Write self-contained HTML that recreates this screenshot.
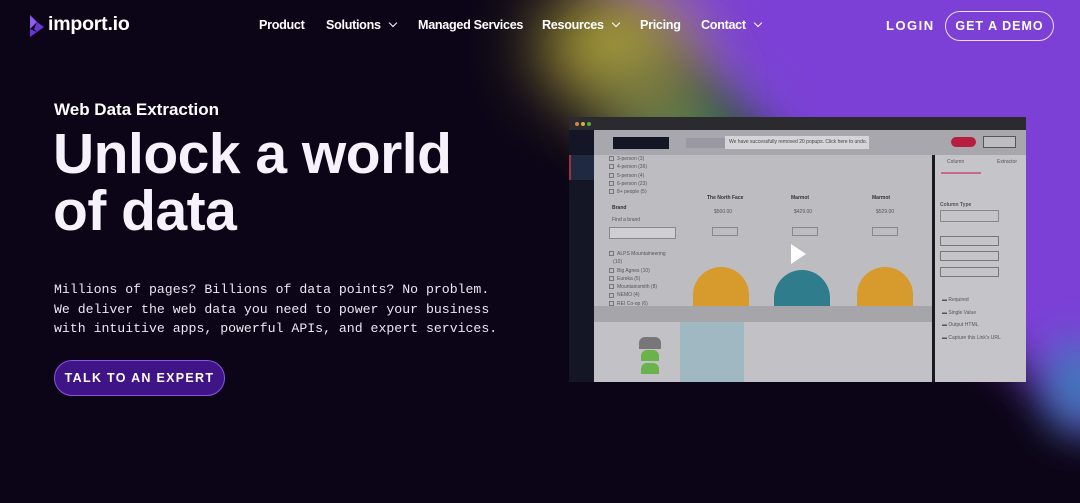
<!DOCTYPE html>
<html><head><meta charset="utf-8"><style>
*{margin:0;padding:0;box-sizing:border-box}
body{width:1080px;height:503px;overflow:hidden;background:#0c0517;font-family:"Liberation Sans",sans-serif;position:relative;color:#fff}
.nav a{position:absolute;top:18px;font-weight:bold;font-size:12.6px;letter-spacing:-.3px;color:#fff;text-decoration:none}
.chev{display:inline-block;width:6px;height:6px;border-right:1.5px solid #fff;border-bottom:1.5px solid #fff;transform:rotate(45deg);margin-left:9px;position:relative;top:-3px}
.abs{position:absolute}
.mono{font-family:"Liberation Mono",monospace}
.t{position:absolute;font-size:5px;color:#555;white-space:nowrap}
.cb{display:inline-block;width:5px;height:5px;border:0.6px solid #777;margin-right:3px;vertical-align:middle}
</style></head><body>
<svg class="abs" style="left:0;top:0" width="1080" height="503">
<defs>
<filter id="b1" filterUnits="userSpaceOnUse" x="-300" y="-300" width="1800" height="1200"><feGaussianBlur stdDeviation="22"/></filter>
<filter id="b2" filterUnits="userSpaceOnUse" x="-300" y="-300" width="1800" height="1200"><feGaussianBlur stdDeviation="35"/></filter>
</defs>
<polygon points="545,-60 1200,-60 1200,450 1080,425" fill="#7c3fd6" filter="url(#b1)"/>
<ellipse cx="615" cy="45" rx="75" ry="55" fill="#b5a83a" filter="url(#b2)"/>
<ellipse cx="690" cy="150" rx="55" ry="55" fill="#4fa56a" filter="url(#b2)"/>
<ellipse cx="650" cy="95" rx="50" ry="40" fill="#8d8a46" filter="url(#b2)"/>
<ellipse cx="1078" cy="385" rx="30" ry="45" fill="#3a80b8" filter="url(#b1)"/>
</svg>
<!-- logo -->
<svg class="abs" style="left:29px;top:15px" width="16" height="22" viewBox="0 0 16 22"><path d="M1 0l7 7-7 7z" fill="#8f5cf0"/><path d="M8 7l7 5-7 5-3-3z" fill="#6a35d6"/><path d="M1 14l7 3-7 5z" fill="#6a35d6"/></svg>
<div class="abs" style="left:48px;top:13px;font-size:19.5px;font-weight:bold;letter-spacing:-.2px">import.io</div>
<div class="nav">
<a style="left:259px">Product</a>
<a style="left:326px">Solutions<span class="chev"></span></a>
<a style="left:418px">Managed Services</a>
<a style="left:542px">Resources<span class="chev"></span></a>
<a style="left:640px">Pricing</a>
<a style="left:701px">Contact<span class="chev"></span></a>
<a style="left:886px;letter-spacing:1.5px;font-size:13px">LOGIN</a>
</div>
<div class="abs" style="left:945px;top:11px;width:109px;height:30px;border:1.3px solid #e8e0f5;border-radius:16px;font-size:12.5px;font-weight:bold;letter-spacing:1px;text-align:center;line-height:28px">GET A DEMO</div>

<div class="abs" style="left:54px;top:100px;font-size:17px;font-weight:bold">Web Data Extraction</div>
<div class="abs" style="left:53px;top:126px;font-size:57px;font-weight:bold;line-height:57px;letter-spacing:-.5px;color:#f6f2fb">Unlock a world<br>of data</div>
<div class="abs mono" style="left:54px;top:280px;font-size:13.2px;line-height:19.5px;color:#ece6f2">Millions of pages? Billions of data points? No problem.<br>We deliver the web data you need to power your business<br>with intuitive apps, powerful APIs, and expert services.</div>
<div class="abs" style="left:54px;top:360px;width:171px;height:36px;border:1.3px solid #8c55e6;background:#3e1487;border-radius:18px;font-size:12.5px;font-weight:bold;letter-spacing:1.3px;text-align:center;line-height:34px">TALK TO AN EXPERT</div>

<!-- app screenshot -->
<div class="abs" style="left:569px;top:117px;width:457px;height:265px;background:#bdbcc0;overflow:hidden">
 <div class="abs" style="left:0;top:0;width:457px;height:13px;background:#2b2a2e"></div>
 <div class="abs" style="left:6px;top:5px;width:4px;height:4px;border-radius:50%;background:#d9823a"></div>
 <div class="abs" style="left:12px;top:5px;width:4px;height:4px;border-radius:50%;background:#d6b23a"></div>
 <div class="abs" style="left:18px;top:5px;width:4px;height:4px;border-radius:50%;background:#4faf4a"></div>
 <div class="abs" style="left:0;top:13px;width:25px;height:252px;background:#141626"></div>
 <div class="abs" style="left:0;top:38px;width:25px;height:25px;background:#1f2a40;border-left:2px solid #a0303a"></div>
 <div class="abs" style="left:25px;top:13px;width:432px;height:25px;background:#a8a7ad"></div>
 <div class="abs" style="left:44px;top:20px;width:56px;height:12px;background:#141626"></div>
 <div class="abs" style="left:117px;top:21px;width:40px;height:10px;background:#9a99a3"></div>
 <div class="abs" style="left:156px;top:19px;width:144px;height:13px;background:#d5d4d8;font-size:5px;color:#444;line-height:13px;padding-left:4px">We have successfully removed 20 popups. Click here to undo.</div>
 <div class="abs" style="left:382px;top:20px;width:25px;height:10px;border-radius:5px;background:#b81d3f"></div>
 <div class="abs" style="left:414px;top:19px;width:33px;height:12px;border:1px solid #555;background:#bdbcc1"></div>
 <div class="t" style="left:40px;top:38px;line-height:8.3px"><span class="cb"></span>3-person (3)<br><span class="cb"></span>4-person (36)<br><span class="cb"></span>5-person (4)<br><span class="cb"></span>6-person (23)<br><span class="cb"></span>8+ people (5)</div>
 <div class="t" style="left:43px;top:88px;font-weight:bold;color:#333">Brand</div>
 <div class="t" style="left:43px;top:100px">Find a brand</div>
 <div class="t" style="left:40px;top:133px;line-height:8.3px"><span class="cb"></span>ALPS Mountaineering<br>&nbsp;&nbsp;&nbsp;(10)<br><span class="cb"></span>Big Agnes (10)<br><span class="cb"></span>Eureka (5)<br><span class="cb"></span>Mountainsmith (8)<br><span class="cb"></span>NEMO (4)<br><span class="cb"></span>REI Co-op (6)<br><span class="cb"></span>Zempire (4)</div>
 <div class="abs" style="left:363px;top:38px;width:3px;height:227px;background:#1a1a22"></div>
 <div class="abs" style="left:366px;top:38px;width:91px;height:227px;background:#c5c4c8"></div>
 <div class="abs" style="left:372px;top:55px;width:40px;height:1.5px;background:#c46a8a"></div>
 <div class="t" style="left:378px;top:42px">Column</div><div class="t" style="left:428px;top:42px">Extractor</div>
 <div class="t" style="left:371px;top:85px;font-weight:bold">Column Type</div>
 <div class="abs" style="left:371px;top:93px;width:59px;height:12px;border:1px solid #888"></div>
 <div class="abs" style="left:371px;top:119px;width:59px;height:10px;border:1px solid #777"></div>
 <div class="abs" style="left:371px;top:134px;width:59px;height:10px;border:1px solid #777"></div>
 <div class="abs" style="left:371px;top:150px;width:59px;height:10px;border:1px solid #777"></div>
 <div class="t" style="left:373px;top:177px;line-height:12.7px">&#9644; Required<br>&#9644; Single Value<br>&#9644; Output HTML<br>&#9644; Capture this Link's URL</div>
 <div class="abs" style="left:25px;top:189px;width:338px;height:16px;background:#a6a5aa"></div>
 <div class="abs" style="left:25px;top:205px;width:338px;height:60px;background:#c2c1c5"></div>
 <div class="abs" style="left:111px;top:205px;width:64px;height:60px;background:#9fb8c2"></div>
 <div class="abs" style="left:70px;top:220px;width:22px;height:12px;background:#777;border-radius:6px 6px 0 0"></div>
 <div class="abs" style="left:72px;top:233px;width:18px;height:11px;background:#6ab24a;border-radius:6px 6px 0 0"></div>
 <div class="abs" style="left:72px;top:246px;width:18px;height:11px;background:#6ab24a;border-radius:6px 6px 0 0"></div>
 <div class="abs" style="left:124px;top:150px;width:56px;height:39px;background:#d79a2c;border-radius:28px 28px 0 0"></div>
 <div class="abs" style="left:205px;top:153px;width:56px;height:36px;background:#2f7c8c;border-radius:28px 28px 0 0"></div>
 <div class="abs" style="left:288px;top:150px;width:56px;height:39px;background:#d79a2c;border-radius:28px 28px 0 0"></div>
 <div class="t" style="left:138px;top:78px;font-weight:bold;color:#333">The North Face</div>
 <div class="t" style="left:222px;top:78px;font-weight:bold;color:#333">Marmot</div>
 <div class="t" style="left:303px;top:78px;font-weight:bold;color:#333">Marmot</div>
 <div class="t" style="left:145px;top:92px">$500.00</div><div class="t" style="left:225px;top:92px">$429.00</div><div class="t" style="left:307px;top:92px">$529.00</div>
 <div class="abs" style="left:40px;top:110px;width:67px;height:12px;border:1px solid #888;background:#cfcfd2"></div>
 <div class="abs" style="left:143px;top:110px;width:26px;height:9px;border:1px solid #888"></div>
 <div class="abs" style="left:223px;top:110px;width:26px;height:9px;border:1px solid #888"></div>
 <div class="abs" style="left:303px;top:110px;width:26px;height:9px;border:1px solid #888"></div>
 <svg class="abs" style="left:220px;top:126px" width="18" height="22"><path d="M2 1l15 10-15 10z" fill="#fff"/></svg>
</div>
</body></html>
